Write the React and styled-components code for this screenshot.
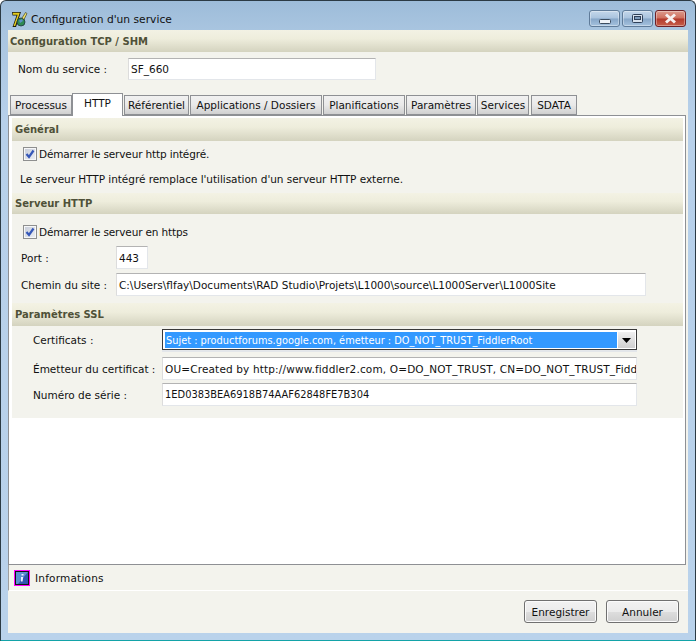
import React from "react";
import styled, { createGlobalStyle } from "styled-components";

const Global = createGlobalStyle`
  html, body { margin: 0; padding: 0; background: #fff; }
  body { font-family: "DejaVu Sans", Verdana, sans-serif; font-size: 10.5px; color: #111; }
  * { box-sizing: border-box; }
`;

const Frame = styled.div`
  width: 696px;
  height: 641px;
  display: flex;
  flex-direction: column;
  padding: 0 7px 7px 7px;
  border: 1px solid #2b3a44;
  border-bottom-color: #13a3a8;
  border-radius: 6px 6px 0 0;
  background: linear-gradient(180deg, #9dbcd9 0, #a9c5e0 30px, #b7d0ea 120px, #b9d2eb 100%);
`;

const TitleBar = styled.div`
  height: 29px;
  flex: none;
  display: flex;
  align-items: center;
  margin: 0 -6px 0 -7px;
  padding: 8px 8px 0 9px;
`;

const TitleText = styled.span`
  margin-left: 3px;
  font-size: 10.7px;
  flex: 1;
`;

const WinButton = styled.div`
  width: 31px;
  height: 17px;
  margin: 1px 0 0 2px;
  align-self: flex-start;
  display: flex;
  align-items: center;
  justify-content: center;
  border: 1px solid ${(p) => (p.$close ? "#6e2026" : "#5f7b99")};
  border-radius: 3px;
  box-shadow: inset 0 0 0 1px rgba(255, 255, 255, 0.35);
  background: ${(p) =>
    p.$close
      ? "linear-gradient(180deg, #dc9a8c 0, #cf6f5e 48%, #b2392b 52%, #c75e4a 100%)"
      : "linear-gradient(180deg, #c4d7ea 0, #a9c3de 48%, #86a6c8 52%, #a5c2de 100%)"};
`;

const Client = styled.div`
  flex: 1;
  min-height: 0;
  display: flex;
  flex-direction: column;
  background: #f3f3ed;
`;

const SectionHeader = styled.div`
  height: ${(p) => p.$h}px;
  flex: none;
  display: flex;
  align-items: center;
  padding-left: ${(p) => p.$pad}px;
  font-size: 10px;
  font-weight: bold;
  color: #4f5138;
  background: linear-gradient(180deg, #f3f2e4 0, #eeeddc 40%, #d4d3bf 100%);
`;

const ServiceRow = styled.div`
  height: 41px;
  flex: none;
  display: flex;
  align-items: center;
  padding: 0 0 7px 10px;
`;

const ServiceLabel = styled.span`
  width: 110px;
`;

const Field = styled.div`
  width: ${(p) => p.$w}px;
  height: ${(p) => p.$h || 23}px;
  flex: none;
  display: flex;
  align-items: center;
  padding-left: 2px;
  font-size: ${(p) => p.$size || 10.5}px;
  letter-spacing: ${(p) => p.$spacing || 0}px;
  white-space: nowrap;
  overflow: hidden;
  background: #fff;
  border: 1px solid #e3e6ea;
  border-top-color: #b3b3b3;
  border-left-color: #dcdcdc;
`;

const TabStrip = styled.div`
  height: 22px;
  flex: none;
  display: flex;
  align-items: flex-end;
  padding-left: 2px;
  position: relative;
  z-index: 1;
`;

const Tab = styled.div`
  width: ${(p) => p.$w}px;
  height: ${(p) => (p.$active ? 23 : 20)}px;
  margin-bottom: ${(p) => (p.$active ? -1 : 0)}px;
  margin-right: ${(p) => p.$gap}px;
  display: flex;
  align-items: center;
  justify-content: center;
  white-space: nowrap;
  border: 1px solid #8e9094;
  border-bottom: ${(p) => (p.$active ? "none" : "1px solid #8e9094")};
  padding-bottom: ${(p) => (p.$active ? 4 : 0)}px;
  background: ${(p) =>
    p.$active ? "#fff" : "linear-gradient(180deg, #f1f1f1 0, #e9e9e9 50%, #d0d0d0 100%)"};
`;

const Panel = styled.div`
  height: 450px;
  flex: none;
  margin-right: 2px;
  display: flex;
  flex-direction: column;
  padding: 2px 2px 0 3px;
  background: #fff;
  border: 1px solid #8e9094;
`;

const Section = styled.div`
  flex: none;
  height: ${(p) => p.$h}px;
  display: flex;
  flex-direction: column;
  background: #f3f3ed;
`;

const CheckRow = styled.div`
  display: flex;
  align-items: center;
  gap: 2px;
  padding-left: 11px;
  margin-top: ${(p) => p.$top}px;
  letter-spacing: -0.15px;
`;

const CheckBox = styled.div`
  width: 14px;
  height: 14px;
  display: flex;
  align-items: center;
  justify-content: center;
  border: 1px solid #8e8f8f;
  background: linear-gradient(135deg, #c6ccd8, #eef0f4);
  box-shadow: inset 0 0 0 1px #f6f7f8;
`;

const Note = styled.div`
  padding-left: 8px;
  margin-top: 12px;
  letter-spacing: -0.04px;
`;

const Row = styled.div`
  display: flex;
  align-items: center;
  padding-left: ${(p) => p.$pad}px;
  margin-top: ${(p) => p.$top}px;
`;

const RowLabel = styled.span`
  width: ${(p) => p.$w}px;
  flex: none;
  white-space: nowrap;
`;

const Combo = styled.div`
  width: 475px;
  height: 21px;
  flex: none;
  display: flex;
  gap: 1px;
  padding: 2px 1px 1px 2px;
  background: #fff;
  border: 1px solid #3a3a3a;
  box-shadow: 0 2px 0 #e3e6ea;
`;

const ComboValue = styled.div`
  flex: 1;
  display: flex;
  align-items: center;
  padding-left: 1px;
  font-size: 9.8px;
  white-space: nowrap;
  overflow: hidden;
  color: #fff;
  background: #3399ff;
`;

const ComboArrow = styled.div`
  width: 17px;
  display: flex;
  align-items: center;
  justify-content: center;
  background: linear-gradient(180deg, #f0f0f0, #cfcfcf);
`;

const StatusBar = styled.div`
  height: 26px;
  flex: none;
  display: flex;
  align-items: center;
  gap: 5px;
  padding: 1px 0 0 5px;
  letter-spacing: 0.2px;
  border-left: 1px solid #a0a0a0;
  border-bottom: 1px solid #fff;
`;

const Footer = styled.div`
  flex: 1;
  display: flex;
  justify-content: flex-end;
  gap: 9px;
  padding: 9px 9px 0 0;
`;

const Button = styled.div`
  width: 73px;
  height: 23px;
  display: flex;
  align-items: center;
  justify-content: center;
  border: 1px solid #707070;
  border-radius: 3px;
  background: linear-gradient(180deg, #f2f2f2 0, #ebebeb 50%, #dddddd 52%, #cfcfcf 100%);
  box-shadow: inset 0 0 0 1px #fbfbfb;
`;

const AppIcon = () => (
  <svg width="18" height="17" viewBox="0 0 18 17">
    <path d="M2 1h9l-5 15H2.5L6.5 4.5H2.5z" fill="#1c1c10" />
    <path d="M2.8 1.8h7L5.2 15H3.6L7.6 3.8H3z" fill="#e4cc1e" />
    <circle cx="11" cy="11" r="4" fill="#2e8a52" stroke="#1e3640" strokeWidth="0.8" />
    <path d="M9 9.5l3-1.5 1 2-3 2z" fill="#5b8fc4" />
    <path d="M12 7l3.5-5.5 1.5 1L14 8.5z" fill="#f1e36a" stroke="#2a2a10" strokeWidth="0.6" />
  </svg>
);

const InfoIcon = () => (
  <svg width="16" height="16" viewBox="0 0 16 16">
    <rect x="0" y="0" width="16" height="16" fill="#ff00ff" />
    <rect x="1" y="1" width="14" height="14" fill="#111" />
    <rect x="2" y="2" width="12" height="12" fill="#5b8fd0" />
    <path d="M14 2v12H4z" fill="#2f55b0" />
    <path d="M7.5 4h2v1.5h-2zM7 7h2.2l-.6 4.5H7z" fill="#eef" />
  </svg>
);

const CheckMark = () => (
  <svg width="10" height="10" viewBox="0 0 10 10">
    <path d="M1.5 5l2.5 3L8.5 1.5" fill="none" stroke="#3557b8" strokeWidth="2.2" />
  </svg>
);

const tabs = [
  ["Processus", 62, 0],
  ["HTTP", 51, 1, true],
  ["Référentiel", 65, 1],
  ["Applications / Dossiers", 132, 1],
  ["Planifications", 82, 1],
  ["Paramètres", 70, 1],
  ["Services", 52, 2],
  ["SDATA", 46, 0],
];

export default function App() {
  return (
    <>
      <Global />
      <Frame>
        <TitleBar>
          <AppIcon />
          <TitleText>Configuration d'un service</TitleText>
          <WinButton>
            <svg width="12" height="11"><rect x=".5" y="6.5" width="11" height="4" rx="1" fill="#eef3f8" stroke="#3c4d60" /></svg>
          </WinButton>
          <WinButton>
            <svg width="11" height="9"><rect x=".5" y=".5" width="10" height="8" rx="1" fill="#d8e2ee" stroke="#2f4058" /><rect x="2.5" y="2.5" width="6" height="3" fill="#7f9cbc" stroke="#2f4058" /></svg>
          </WinButton>
          <WinButton $close>
            <svg width="15" height="11"><path d="M3 1.5l9 8M12 1.5l-9 8" stroke="#f6f0f0" strokeWidth="3" /></svg>
          </WinButton>
        </TitleBar>
        <Client>
          <SectionHeader $h={22} $pad={2}>Configuration TCP / SHM</SectionHeader>
          <ServiceRow>
            <ServiceLabel>Nom du service :</ServiceLabel>
            <Field $w={248} $h={22}>SF_660</Field>
          </ServiceRow>
          <TabStrip>
            {tabs.map(([label, w, gap, active]) => (
              <Tab key={label} $w={w} $gap={gap} $active={active}>{label}</Tab>
            ))}
          </TabStrip>
          <Panel>
            <Section $h={75}>
              <SectionHeader $h={23} $pad={3}>Général</SectionHeader>
              <CheckRow $top={6}>
                <CheckBox><CheckMark /></CheckBox>
                Démarrer le serveur http intégré.
              </CheckRow>
              <Note>Le serveur HTTP intégré remplace l'utilisation d'un serveur HTTP externe.</Note>
            </Section>
            <Section $h={110}>
              <SectionHeader $h={21} $pad={3}>Serveur HTTP</SectionHeader>
              <CheckRow $top={11}>
                <CheckBox><CheckMark /></CheckBox>
                Démarrer le serveur en https
              </CheckRow>
              <Row $pad={9} $top={7}>
                <RowLabel $w={95}>Port :</RowLabel>
                <Field $w={32}>443</Field>
              </Row>
              <Row $pad={9} $top={4}>
                <RowLabel $w={95}>Chemin du site :</RowLabel>
                <Field $w={530}>C:\Users\flfay\Documents\RAD Studio\Projets\L1000\source\L1000Server\L1000Site</Field>
              </Row>
            </Section>
            <Section $h={115}>
              <SectionHeader $h={23} $pad={3}>Paramètres SSL</SectionHeader>
              <Row $pad={21} $top={3}>
                <RowLabel $w={129}>Certificats :</RowLabel>
                <Combo>
                  <ComboValue>Sujet : productforums.google.com, émetteur : DO_NOT_TRUST_FiddlerRoot</ComboValue>
                  <ComboArrow>
                    <svg width="9" height="5"><path d="M0 0h9L4.5 5z" fill="#000" /></svg>
                  </ComboArrow>
                </Combo>
              </Row>
              <Row $pad={21} $top={7}>
                <RowLabel $w={129}>Émetteur du certificat :</RowLabel>
                <Field $w={475} $spacing={0.15}>OU=Created by http://www.fiddler2.com, O=DO_NOT_TRUST, CN=DO_NOT_TRUST_FiddlerRoot</Field>
              </Row>
              <Row $pad={21} $top={3}>
                <RowLabel $w={129}>Numéro de série :</RowLabel>
                <Field $w={475} $size={9.9}>1ED0383BEA6918B74AAF62848FE7B304</Field>
              </Row>
            </Section>
          </Panel>
          <StatusBar>
            <InfoIcon />
            Informations
          </StatusBar>
          <Footer>
            <Button>Enregistrer</Button>
            <Button>Annuler</Button>
          </Footer>
        </Client>
      </Frame>
    </>
  );
}
